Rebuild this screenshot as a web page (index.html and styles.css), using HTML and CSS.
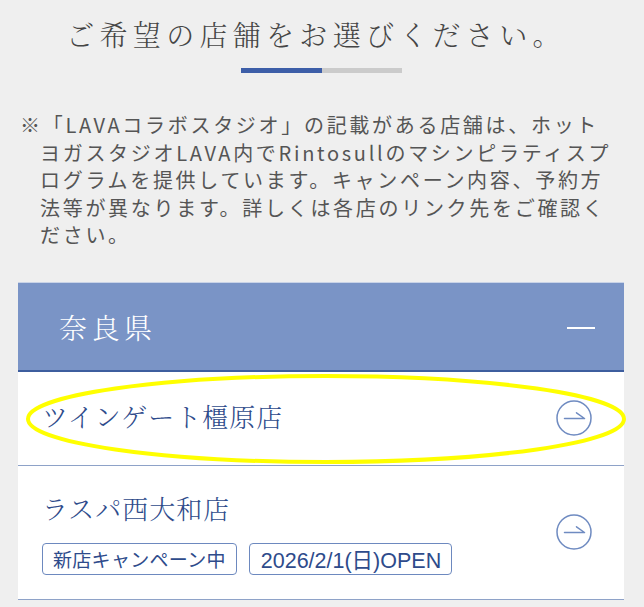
FILE: index.html
```html
<!DOCTYPE html>
<html lang="ja">
<head>
<meta charset="utf-8">
<title>店舗選択</title>
<link rel="stylesheet" href="styles.css">
</head>
<body>
<main class="page">
  <h1 class="title">ご希望の店舗をお選びください。</h1>
  <div class="progress"><span class="progress-fill"></span></div>
  <p class="note">※「LAVAコラボスタジオ」の記載がある店舗は、ホット<br>ヨガスタジオLAVA内でRintosullのマシンピラティスプ<br>ログラムを提供しています。キャンペーン内容、予約方<br>法等が異なります。詳しくは各店のリンク先をご確認く<br>ださい。</p>

  <section class="card">
    <div class="card-head">
      <span class="pref">奈良県</span>
      <span class="minus"></span>
    </div>
    <div class="shop shop-first">
      <span class="shop-name">ツインゲート橿原店</span>
      <svg class="go" width="36" height="36" viewBox="0 0 36 36"><circle cx="18" cy="18" r="17" fill="none" stroke="#6f8bc1" stroke-width="1.5"/><path d="M8.5 18.5H28.5M20.5 12.8L28.5 18.5" fill="none" stroke="#6f8bc1" stroke-width="1.5" stroke-linecap="round"/></svg>
      <svg class="mark" width="608" height="96" viewBox="0 0 608 96"><ellipse cx="301" cy="46" rx="298" ry="43" fill="none" stroke="#ffff00" stroke-width="4"/></svg>
    </div>
    <div class="shop shop-second">
      <div class="shop-body">
        <span class="shop-name">ラスパ西大和店</span>
        <div class="tags">
          <span class="tag">新店キャンペーン中</span>
          <span class="tag tag-date">2026/2/1(日)OPEN</span>
        </div>
      </div>
      <svg class="go" width="36" height="36" viewBox="0 0 36 36"><circle cx="18" cy="18" r="17" fill="none" stroke="#6f8bc1" stroke-width="1.5"/><path d="M8.5 18.5H28.5M20.5 12.8L28.5 18.5" fill="none" stroke="#6f8bc1" stroke-width="1.5" stroke-linecap="round"/></svg>
    </div>
  </section>
</main>
</body>
</html>
```
FILE: styles.css
```css
html, body {
  margin: 0;
  padding: 0;
  background: #efefef;
}
body {
  width: 644px;
  height: 607px;
  overflow: hidden;
  font-family: "Noto Sans CJK JP", "Noto Sans", sans-serif;
}
.page {
  width: 606px;
  margin-left: 18px;
  padding-top: 14px;
}
.title {
  margin: 0;
  text-align: center;
  font-family: "Noto Serif CJK JP", "Noto Sans CJK JP", serif;
  font-weight: 300;
  font-size: 28px;
  line-height: 40px;
  letter-spacing: 5.3px;
  color: #454545;
  padding-right: 10px;
}
.progress {
  width: 161px;
  height: 5px;
  margin: 14px auto 0;
  background: #cbcbcb;
  display: flex;
}
.progress-fill {
  width: 81px;
  background: #3d5ea8;
}
.note {
  margin: 38px 0 0;
  padding-left: 22px;
  text-indent: -20px;
  font-size: 20px;
  line-height: 27.5px;
  letter-spacing: 2.7px;
  color: #555;
  white-space: nowrap;
}
.card {
  margin-top: 33px;
  background: #fff;
}
.card-head {
  height: 87px;
  background: #7a94c6;
  border-top: 1px solid #c9d3e7;
  border-bottom: 2px solid #3d5e9e;
  display: flex;
  align-items: center;
  justify-content: space-between;
  padding: 0 29px 0 41px;
}
.pref {
  font-family: "Noto Serif CJK JP", "Noto Sans CJK JP", serif;
  font-weight: 300;
  font-size: 28px;
  letter-spacing: 4.5px;
  color: #fff;
  margin-top: 2px;
}
.minus {
  width: 28px;
  height: 2px;
  background: #fff;
  margin-top: 4px;
}
.shop {
  display: flex;
  align-items: center;
  justify-content: space-between;
  padding: 0 32px 0 24px;
  border-bottom: 1.5px solid #8ea2c8;
}
.shop-first {
  position: relative;
  height: 93px;
}
.shop-second {
  padding-top: 24px;
  padding-bottom: 24px;
}
.shop-name {
  font-family: "Noto Serif CJK JP", "Noto Sans CJK JP", serif;
  font-weight: 300;
  font-size: 26px;
  line-height: 36px;
  letter-spacing: 1px;
  color: #2e4b8b;
}
.shop-first .shop-name {
  margin-top: -4px;
}
.go {
  display: block;
  flex: none;
}
.mark {
  position: absolute;
  left: 7px;
  top: 1px;
  overflow: visible;
  pointer-events: none;
}
.shop-body {
  display: flex;
  flex-direction: column;
}
.tags {
  display: flex;
  gap: 12px;
  margin-top: 17px;
}
.tag {
  display: flex;
  align-items: center;
  height: 30px;
  padding: 0 10px;
  border: 1.5px solid #6d89bf;
  border-radius: 4px;
  font-size: 19px;
  letter-spacing: 0.3px;
  color: #2e4b8b;
}
.tag-date {
  font-family: "Liberation Sans", "Noto Sans CJK JP", sans-serif;
  font-size: 21.5px;
  letter-spacing: 0;
  padding: 0 10px 0 11px;
}
```
